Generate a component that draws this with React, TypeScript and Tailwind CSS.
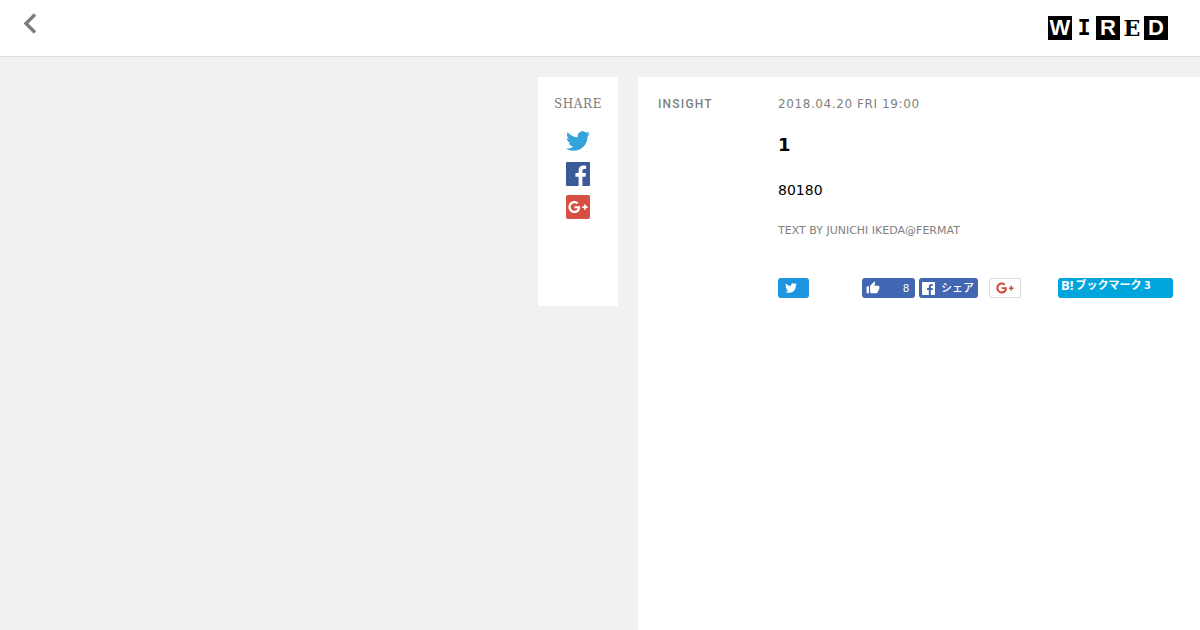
import { FaTwitter, FaGooglePlusG } from "react-icons/fa";
import { MdThumbUp } from "react-icons/md";

function ChevronLeft() {
  return (
    <svg viewBox="0 0 24 24" className="size-6" fill="none" stroke="#7d7d7d" strokeWidth="3.4" aria-hidden="true">
      <path d="M17 2.5 8 11.5l9 9" />
    </svg>
  );
}

function FacebookTile({ tile, glyph, className }: { tile: string; glyph: string; className: string }) {
  return (
    <svg viewBox="0 0 24 24" className={className} aria-hidden="true">
      <rect width="24" height="24" rx="1.3" fill={tile} />
      <path
        fill={glyph}
        d="M12.6 24v-9.2H9.4v-3.8h3.2V8.3c0-3.1 1.9-4.8 4.7-4.8 1.3 0 2.4.1 2.8.2v3.4h-1.9c-1.5 0-1.8.7-1.8 1.8V11h3.6l-.5 3.8h-3.1V24z"
      />
    </svg>
  );
}

function WiredLogo() {
  return (
    <a href="#home" aria-label="WIRED" className="flex">
      <span className="flex size-6 items-center justify-center bg-black font-['Liberation_Sans'] text-[22px] leading-6 font-bold text-white">W</span>
      <span className="flex size-6 items-center justify-center font-['DejaVu_Sans_Mono'] text-[22px] leading-6 font-bold text-black">I</span>
      <span className="flex size-6 items-center justify-center bg-black font-['Liberation_Sans'] text-[22px] leading-6 font-bold text-white">R</span>
      <span className="flex size-6 items-center justify-center font-['DejaVu_Serif'] text-[22px] leading-6 font-bold text-black">E</span>
      <span className="flex size-6 items-center justify-center bg-black font-['Liberation_Sans'] text-[22px] leading-6 font-bold text-white">D</span>
    </a>
  );
}

export default function App() {
  return (
    <div className="flex min-h-screen flex-col bg-[#f1f1f1] font-['DejaVu_Sans',sans-serif] text-black">
      <header className="flex h-[57px] items-center justify-between border-b border-[#dedede] bg-white pr-8 pl-[18px]">
        <button type="button" aria-label="Back" className="mb-2">
          <ChevronLeft />
        </button>
        <WiredLogo />
      </header>

      <main className="flex flex-1 items-stretch gap-5 pt-5">
        <div className="flex w-[618px] shrink-0 items-start justify-end">
          <aside className="flex h-[229px] w-20 flex-col items-center bg-white pt-[19px]">
            <h2 className="font-['DejaVu_Serif',serif] text-xs leading-4 tracking-wider text-[#7a7a7a]">SHARE</h2>
            <nav aria-label="Share" className="mt-[17px] flex flex-col gap-[9px]">
              <a href="#twitter" aria-label="Twitter">
                <FaTwitter className="size-6 text-[#34a3db]" />
              </a>
              <a href="#facebook" aria-label="Facebook">
                <FacebookTile tile="#3c5a98" glyph="#ffffff" className="size-6" />
              </a>
              <a href="#google-plus" aria-label="Google+" className="flex size-6 items-center justify-center rounded-xs bg-[#d64f43] text-white">
                <FaGooglePlusG className="size-5" />
              </a>
            </nav>
          </aside>
        </div>

        <article className="flex min-w-0 flex-1 items-start bg-white pt-[19px] pl-5">
          <p className="w-[120px] shrink-0 font-['Roboto',sans-serif] text-xs leading-4 font-medium tracking-widest text-[#7f7f7f]">INSIGHT</p>
          <div className="min-w-0 flex-1">
            <time dateTime="2018-04-20T19:00" className="block text-xs leading-4 tracking-wider text-[#7f7f7f]">
              2018.04.20 FRI 19:00
            </time>
            <h1 className="mt-[19px] text-lg leading-7 font-bold">1</h1>
            <p className="mt-[19px] text-sm leading-6">80180</p>
            <p className="mt-[21px] text-[11px] leading-4 text-[#7f7f7f]">TEXT BY JUNICHI IKEDA@FERMAT</p>
            <div className="mt-[39px] flex">
              <div className="w-[84px] shrink-0">
                <button type="button" aria-label="Tweet" className="flex h-5 w-[31px] items-center rounded-[3px] bg-[#1d95e0] pl-[7px]">
                  <FaTwitter className="size-3 text-white" />
                </button>
              </div>
              <div className="flex w-[127px] shrink-0 gap-1 font-['Liberation_Sans','Noto_Sans_CJK_JP',sans-serif] text-[11px] text-white">
                <button type="button" aria-label="Like 8" className="flex h-5 w-[53px] items-center justify-between rounded-[3px] bg-[#4267b2] pr-[6px] pl-1">
                  <MdThumbUp className="size-[14px]" />
                  <span>8</span>
                </button>
                <button type="button" className="flex h-5 w-[59px] items-center gap-[6px] rounded-[3px] bg-[#4267b2] pl-[3px] font-medium whitespace-nowrap">
                  <FacebookTile tile="#ffffff" glyph="#4267b2" className="size-[13px] shrink-0" />
                  シェア
                </button>
              </div>
              <div className="w-[69px] shrink-0">
                <button type="button" aria-label="Google+" className="flex h-5 w-8 items-center justify-center rounded-xs border border-[#d9d9d9] bg-white">
                  <FaGooglePlusG className="size-[18px] text-[#d0493c]" />
                </button>
              </div>
              <button type="button" className="flex h-5 w-[115px] shrink-0 items-start gap-[2px] rounded-[3px] bg-[#00a5de] pl-[3px] font-['Open_Sans','Noto_Sans_CJK_JP',sans-serif] text-[11px] leading-[14px] font-bold whitespace-nowrap text-white">
                <span className="text-[13px]">B!</span>
                <span>ブックマーク 3</span>
              </button>
            </div>
          </div>
        </article>
      </main>
    </div>
  );
}
